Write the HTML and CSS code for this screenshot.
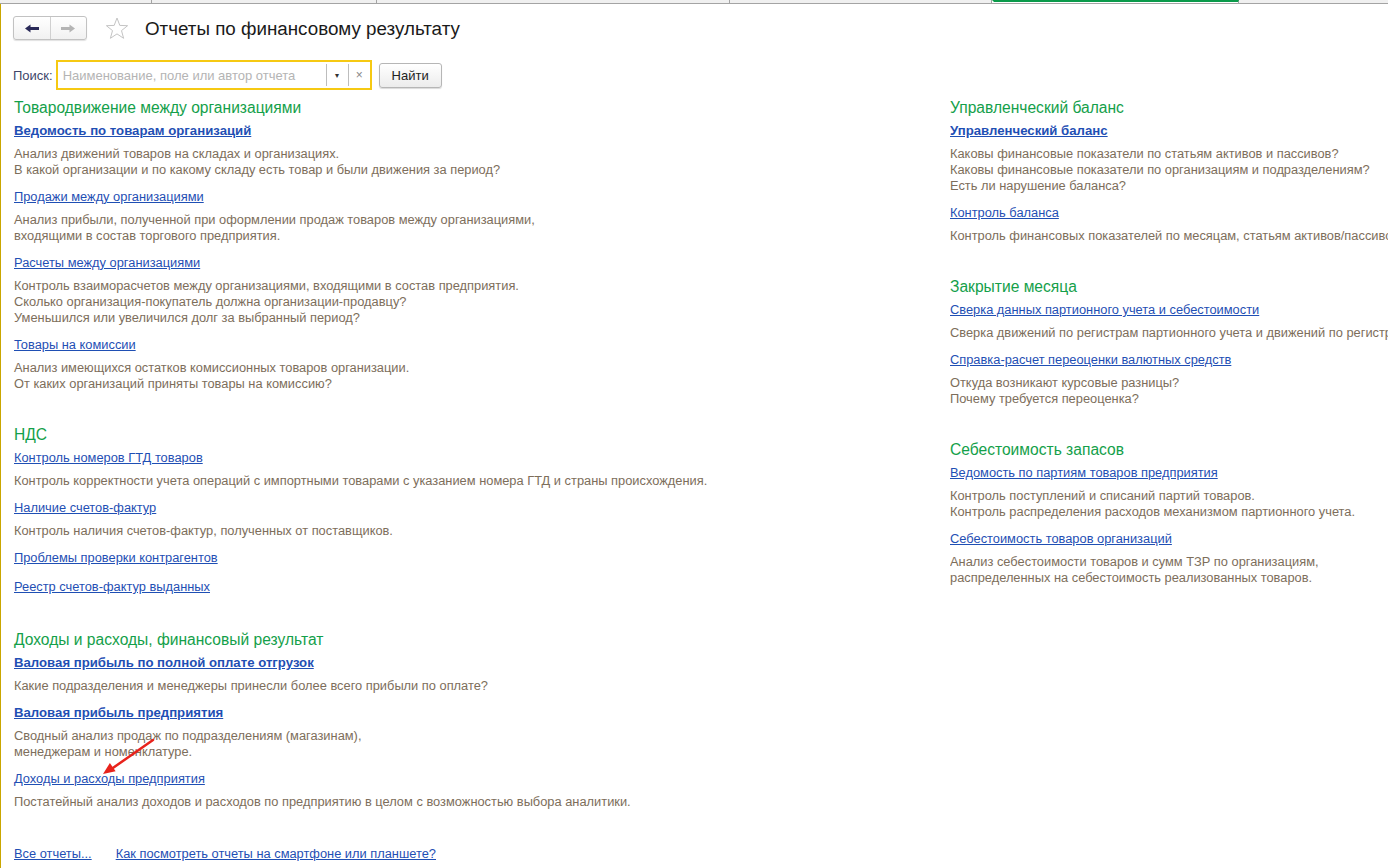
FILE: index.html
```html
<!DOCTYPE html>
<html lang="ru">
<head>
    <meta charset="UTF-8">
    <title>Отчеты по финансовому результату</title>
    <link rel="stylesheet" href="styles.css">
</head>
<body>
    <div class="tabs">
        <div class="tab t1"></div>
        <div class="tab t2"></div>
        <div class="tab t3"></div>
        <div class="tab t4"></div>
        <div class="tab t5 active"></div>
        <div class="tab t6"></div>
    </div>

    <div class="page">
        <div class="titlebar">
            <div class="nav-buttons">
                <span class="nav-btn">
                    <svg width="14" height="9" viewBox="0 0 14 9"><path d="M0 4.5 L5.5 0.5 V3 H14 V6 H5.5 V8.5 Z" fill="#2a2a58"/></svg>
                </span>
                <span class="nav-btn">
                    <svg width="14" height="9" viewBox="0 0 14 9"><path d="M14 4.5 L8.5 0.5 V3 H0 V6 H8.5 V8.5 Z" fill="#b4b4b4"/></svg>
                </span>
            </div>
            <svg class="star" width="24" height="23" viewBox="0 0 24 23">
                <path d="M12 1 L14.8 8.4 L22.6 8.7 L16.5 13.6 L18.6 21.3 L12 16.9 L5.4 21.3 L7.5 13.6 L1.4 8.7 L9.2 8.4 Z" fill="none" stroke="#c4c4c4" stroke-width="1"/>
            </svg>
            <h1>Отчеты по финансовому результату</h1>
        </div>

        <div class="search">
            <span class="search-label">Поиск:</span>
            <div class="search-box">
                <span class="placeholder">Наименование, поле или автор отчета</span>
                <span class="search-drop">&#9662;</span>
                <span class="search-clear">&times;</span>
            </div>
            <span class="btn">Найти</span>
        </div>

        <div class="columns">
            <div class="column">
                <div class="group">
                    <h2>Товародвижение между организациями</h2>
                    <div class="item">
                        <a class="bold" href="#">Ведомость по товарам организаций</a>
                        <p>Анализ движений товаров на складах и организациях.<br>В какой организации и по какому складу есть товар и были движения за период?</p>
                    </div>
                    <div class="item">
                        <a href="#">Продажи между организациями</a>
                        <p>Анализ прибыли, полученной при оформлении продаж товаров между организациями,<br>входящими в состав торгового предприятия.</p>
                    </div>
                    <div class="item">
                        <a href="#">Расчеты между организациями</a>
                        <p>Контроль взаиморасчетов между организациями, входящими в состав предприятия.<br>Сколько организация-покупатель должна организации-продавцу?<br>Уменьшился или увеличился долг за выбранный период?</p>
                    </div>
                    <div class="item">
                        <a href="#">Товары на комиссии</a>
                        <p>Анализ имеющихся остатков комиссионных товаров организации.<br>От каких организаций приняты товары на комиссию?</p>
                    </div>
                </div>

                <div class="group">
                    <h2>НДС</h2>
                    <div class="item">
                        <a href="#">Контроль номеров ГТД товаров</a>
                        <p>Контроль корректности учета операций с импортными товарами с указанием номера ГТД и страны происхождения.</p>
                    </div>
                    <div class="item">
                        <a href="#">Наличие счетов-фактур</a>
                        <p>Контроль наличия счетов-фактур, полученных от поставщиков.</p>
                    </div>
                    <div class="item bare">
                        <a href="#">Проблемы проверки контрагентов</a>
                    </div>
                    <div class="item bare">
                        <a href="#">Реестр счетов-фактур выданных</a>
                    </div>
                </div>

                <div class="group">
                    <h2>Доходы и расходы, финансовый результат</h2>
                    <div class="item">
                        <a class="bold" href="#">Валовая прибыль по полной оплате отгрузок</a>
                        <p>Какие подразделения и менеджеры принесли более всего прибыли по оплате?</p>
                    </div>
                    <div class="item">
                        <a class="bold" href="#">Валовая прибыль предприятия</a>
                        <p>Сводный анализ продаж по подразделениям (магазинам),<br>менеджерам и номенклатуре.</p>
                    </div>
                    <div class="item">
                        <a href="#">Доходы и расходы предприятия</a>
                        <p>Постатейный анализ доходов и расходов по предприятию в целом с возможностью выбора аналитики.</p>
                    </div>
                </div>
            </div>

            <div class="column right">
                <div class="group">
                    <h2>Управленческий баланс</h2>
                    <div class="item">
                        <a class="bold" href="#">Управленческий баланс</a>
                        <p>Каковы финансовые показатели по статьям активов и пассивов?<br>Каковы финансовые показатели по организациям и подразделениям?<br>Есть ли нарушение баланса?</p>
                    </div>
                    <div class="item">
                        <a href="#">Контроль баланса</a>
                        <p>Контроль финансовых показателей по месяцам, статьям активов/пассивов и организациям.</p>
                    </div>
                </div>

                <div class="group">
                    <h2>Закрытие месяца</h2>
                    <div class="item">
                        <a href="#">Сверка данных партионного учета и себестоимости</a>
                        <p>Сверка движений по регистрам партионного учета и движений по регистрам себестоимости.</p>
                    </div>
                    <div class="item">
                        <a href="#">Справка-расчет переоценки валютных средств</a>
                        <p>Откуда возникают курсовые разницы?<br>Почему требуется переоценка?</p>
                    </div>
                </div>

                <div class="group">
                    <h2>Себестоимость запасов</h2>
                    <div class="item">
                        <a href="#">Ведомость по партиям товаров предприятия</a>
                        <p>Контроль поступлений и списаний партий товаров.<br>Контроль распределения расходов механизмом партионного учета.</p>
                    </div>
                    <div class="item">
                        <a href="#">Себестоимость товаров организаций</a>
                        <p>Анализ себестоимости товаров и сумм ТЗР по организациям,<br>распределенных на себестоимость реализованных товаров.</p>
                    </div>
                </div>
            </div>
        </div>

        <div class="footer">
            <a href="#">Все отчеты...</a>
            <a href="#">Как посмотреть отчеты на смартфоне или планшете?</a>
        </div>

        <!-- red pointer over the "Доходы и расходы" link -->
        <svg class="pointer" width="64" height="48" viewBox="0 0 64 48">
            <line x1="57" y1="6" x2="14" y2="36" stroke="#e8231c" stroke-width="2.5" stroke-linecap="round"/>
            <path d="M7 40 L19.6 37.3 L13.9 29.1 Z" fill="#e8231c"/>
        </svg>
    </div>
</body>
</html>
```

FILE: styles.css
```css
/* Base */
html, body {
    margin: 0;
    padding: 0;
    background: #fff;
    overflow: hidden;
}

body {
    font-family: 'Liberation Sans', Arial, sans-serif;
    font-size: 13px;
    color: #333;
}

/* Tab strip along the top edge */
.tabs {
    display: flex;
    height: 3px;
    background: #f0f0f0;
    border-bottom: 1px solid #a4a4a4;
}

.tab {
    border-right: 1px solid #a4a4a4;
    box-sizing: border-box;
}

.t1 { width: 152px; }
.t2 { width: 225px; }
.t3 { width: 353px; }
.t4 { width: 262px; }
.t5 { width: 247px; }
.t6 { flex: 1; border-right: none; }

.tab.active {
    background: #fff;
    border-top: 2px solid #0a9a4a;
    border-left: 2px solid #fff;
}

/* Form frame */
.page {
    position: relative;
    height: 864px;
    border-left: 1px solid #c9a600;
    padding: 12px 0 0 12px;
    box-sizing: border-box;
}

.titlebar {
    display: flex;
    align-items: center;
    height: 24px;
}

.nav-buttons {
    display: flex;
    width: 72px;
    height: 22px;
    border: 1px solid #c2c2c2;
    border-radius: 3px;
    background: linear-gradient(#fff, #f1f1f1);
    box-shadow: 0 1px 1px rgba(0, 0, 0, 0.12);
}

.nav-btn {
    flex: 1;
    display: flex;
    align-items: center;
    justify-content: center;
}

.nav-btn + .nav-btn {
    border-left: 1px solid #d0d0d0;
}

.star {
    margin-left: 18px;
}

h1 {
    margin: 2px 0 0 16px;
    font-size: 18.8px;
    font-weight: normal;
    color: #1a1a1a;
}

/* Search row */
.search {
    display: flex;
    align-items: center;
    margin-top: 20px;
    height: 30px;
}

.search-label {
    color: #40466a;
    margin-right: 3px;
}

.search-box {
    display: flex;
    align-items: center;
    width: 316px;
    height: 30px;
    box-sizing: border-box;
    border: 2px solid #f6c913;
    background: #fff;
}

.placeholder {
    flex: 1;
    padding-left: 5px;
    color: #b4b4b4;
}

.search-drop,
.search-clear {
    display: flex;
    align-items: center;
    justify-content: center;
    height: 22px;
    border-left: 1px solid #bdbdbd;
}

.search-drop {
    width: 21px;
    font-size: 8px;
    color: #333;
}

.search-clear {
    width: 21px;
    font-size: 12px;
    color: #888;
}

.btn {
    display: flex;
    align-items: center;
    justify-content: center;
    margin-left: 7px;
    width: 61px;
    height: 23px;
    border: 1px solid #b6b6b6;
    border-radius: 3px;
    background: linear-gradient(#fff, #ececec);
    box-shadow: 0 1px 1px rgba(0, 0, 0, 0.15);
    color: #222;
}

/* Report groups */
.columns {
    display: grid;
    grid-template-columns: 936px minmax(0, 1fr);
    margin-top: 8px;
    margin-left: 1px;
}

.column.right {
    overflow: hidden;
    white-space: nowrap;
}

.group {
    padding-bottom: 22px;
}

h2 {
    margin: 0 0 5px;
    font-size: 15.6px;
    line-height: 20px;
    font-weight: normal;
    color: #14a04a;
}

.item {
    margin-bottom: 11px;
}

.item.bare {
    margin-bottom: 13px;
}

a {
    color: #1f4fb4;
    text-decoration: underline;
    font-size: 12.85px;
    line-height: 16px;
}

.item a {
    display: inline-block;
}

a.bold {
    font-weight: bold;
    font-size: 13.2px;
}

.item p {
    margin: 7px 0 0;
    font-size: 12.85px;
    line-height: 16px;
    color: #7d6e5b;
}

.footer {
    display: flex;
    gap: 24px;
    margin-top: 3px;
    margin-left: 1px;
}

/* Annotation arrow drawn on top of the list */
.pointer {
    position: absolute;
    left: 95px;
    top: 730px;
}
```
